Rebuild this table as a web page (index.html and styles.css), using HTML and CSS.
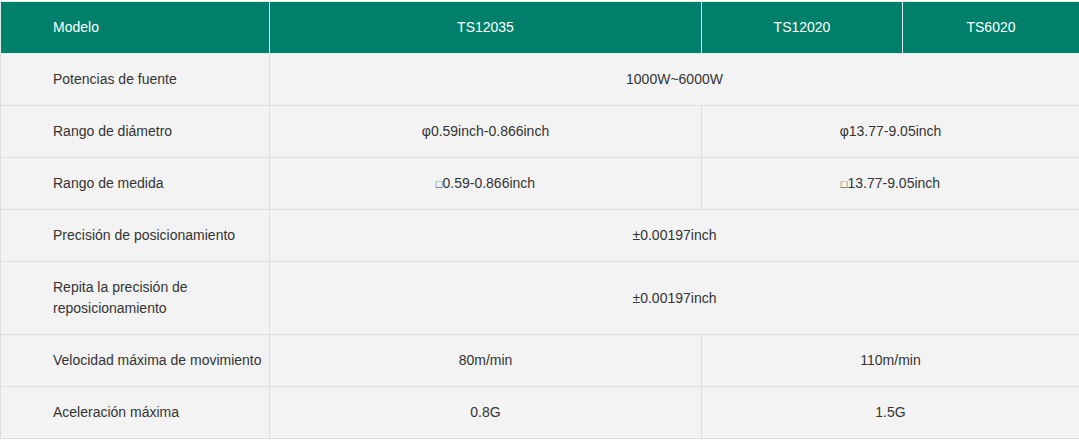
FILE: index.html
```html
<!DOCTYPE html>
<html lang="es">
<head>
<meta charset="utf-8">
<title>Especificaciones</title>
<link rel="stylesheet" href="styles.css">
</head>
<body>
<table class="spec">
  <colgroup>
    <col class="c1"><col class="c2"><col class="c3"><col class="c4">
  </colgroup>
  <thead>
    <tr>
      <th class="label">Modelo</th>
      <th>TS12035</th>
      <th>TS12020</th>
      <th>TS6020</th>
    </tr>
  </thead>
  <tbody>
    <tr>
      <td class="label">Potencias de fuente</td>
      <td colspan="3">1000W~6000W</td>
    </tr>
    <tr>
      <td class="label">Rango de diámetro</td>
      <td>φ0.59inch-0.866inch</td>
      <td colspan="2">φ13.77-9.05inch</td>
    </tr>
    <tr>
      <td class="label">Rango de medida</td>
      <td><span class="sq">□</span>0.59-0.866inch</td>
      <td colspan="2"><span class="sq">□</span>13.77-9.05inch</td>
    </tr>
    <tr>
      <td class="label">Precisión de posicionamiento</td>
      <td colspan="3">±0.00197inch</td>
    </tr>
    <tr>
      <td class="label">Repita la precisión de reposicionamiento</td>
      <td colspan="3">±0.00197inch</td>
    </tr>
    <tr>
      <td class="label nowrap">Velocidad máxima de movimiento</td>
      <td>80m/min</td>
      <td colspan="2">110m/min</td>
    </tr>
    <tr>
      <td class="label">Aceleración máxima</td>
      <td>0.8G</td>
      <td colspan="2">1.5G</td>
    </tr>
  </tbody>
</table>
</body>
</html>
```

FILE: styles.css
```css
html, body {
  margin: 0;
  padding: 0;
  background: #ffffff;
}

body {
  padding-top: 1px;
  font-family: "Liberation Sans", Arial, sans-serif;
  font-size: 14px;
  color: #333333;
}

.spec {
  width: 1079px;
  border-collapse: collapse;
  table-layout: fixed;
  border: 1px solid #dddddd;
}

.c1 { width: 269px; }
.c2 { width: 432px; }
.c3 { width: 201px; }
.c4 { width: 177px; }

.spec th,
.spec td {
  border: 1px solid #dddddd;
  padding: 15px 12px;
  line-height: 21px;
  text-align: center;
  vertical-align: middle;
}

.spec th {
  background: #00806a;
  color: #ffffff;
  font-weight: normal;
  border-color: #e3ebe9;
}

.spec td {
  background: #f3f3f3;
}

.spec .label {
  text-align: left;
  padding-left: 52px;
  padding-right: 2px;
}

.spec .nowrap {
  white-space: nowrap;
}

.sq {
  font-size: 11px;
  line-height: 0;
}
```
